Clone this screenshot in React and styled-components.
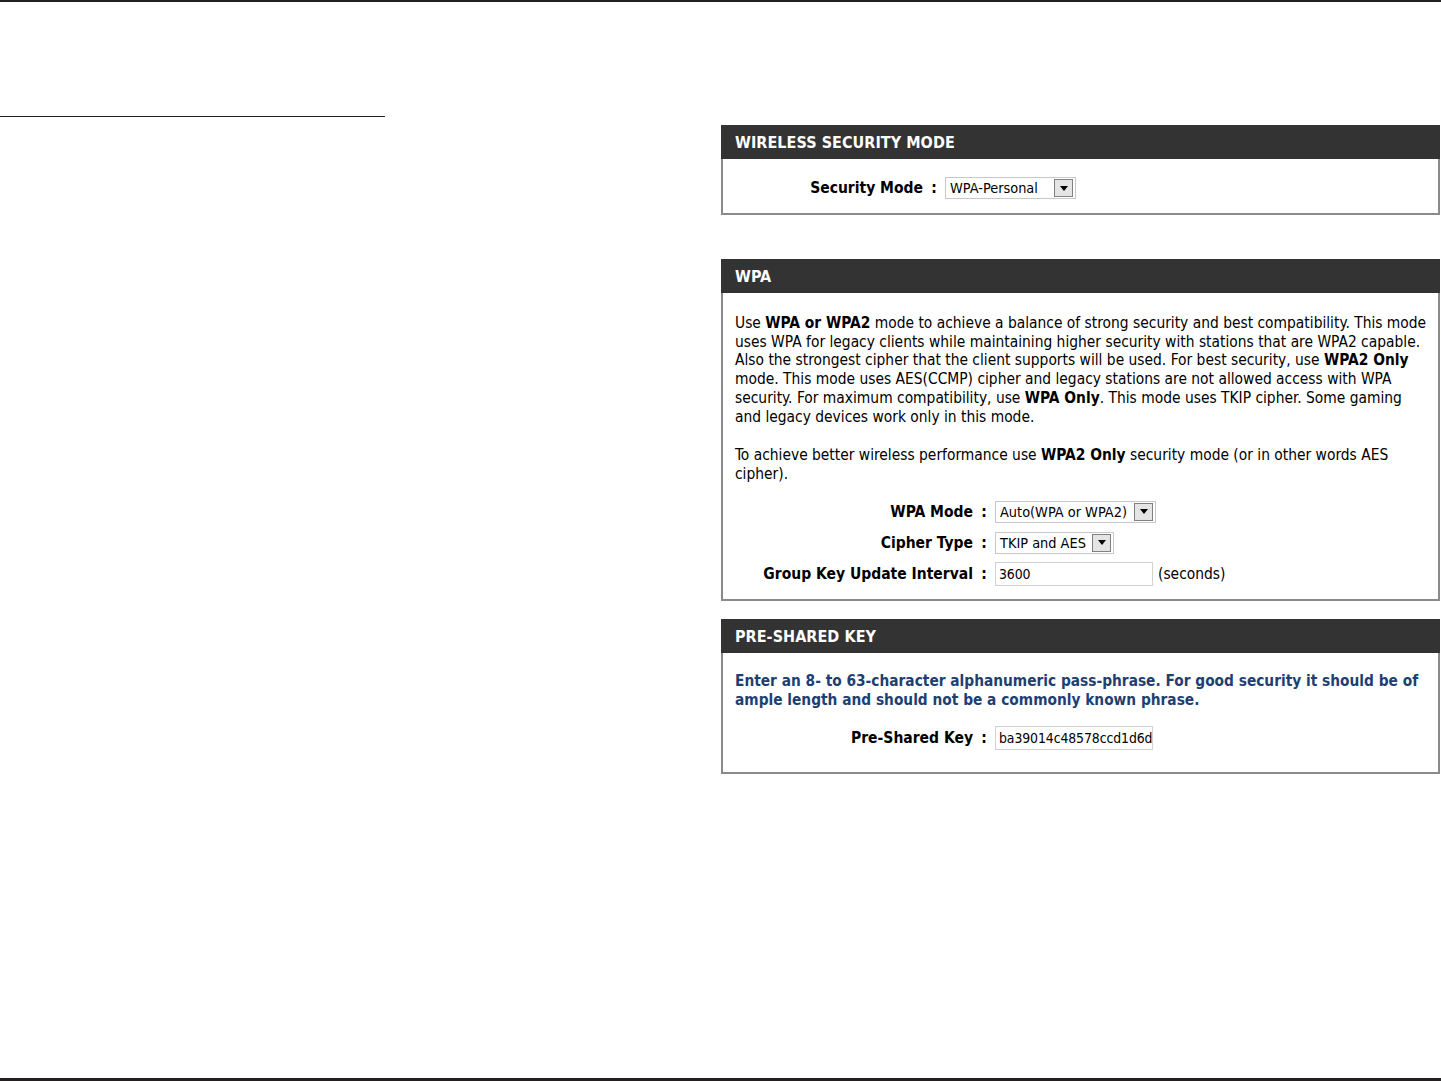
import React from 'react';
import styled, { createGlobalStyle } from 'styled-components';

const GlobalStyle = createGlobalStyle`
  html, body {
    margin: 0;
    padding: 0;
    background: #ffffff;
  }
  body {
    font-family: "DejaVu Sans Condensed", "DejaVu Sans", sans-serif;
    color: #000;
  }
`;

const Page = styled.div`
  box-sizing: border-box;
  height: 1081px;
  border-top: 2px solid #231f20;
  border-bottom: 3px solid #231f20;
  display: grid;
  grid-template-columns: 721px 719px;
  align-items: start;
`;

const LeftColumn = styled.div`
  padding-top: 114px;
`;

const ShortRule = styled.div`
  width: 385px;
  border-top: 1.5px solid #231f20;
`;

const RightColumn = styled.div`
  padding-top: 123px;
  display: flex;
  flex-direction: column;
`;

const Panel = styled.section`
  border: 2px solid #8a8a8a;
  border-top: none;
  background: #fff;
  margin-bottom: ${(p) => p.$gap || 0}px;
`;

const PanelHeader = styled.h2`
  margin: 0 -2px;
  height: 34px;
  background: #333333;
  color: #fff;
  font-size: 16px;
  font-weight: bold;
  line-height: 35px;
  padding-left: 14px;
  letter-spacing: 0.05px;
`;

const PanelBody = styled.div`
  padding: ${(p) => p.$pad || '18px 4px 12px 12px'};
`;

const Para = styled.p`
  margin: 0 0 ${(p) => p.$mb || 0}px 0;
  font-size: ${(p) => (p.$blue ? 15.3 : 15.4)}px;
  line-height: ${(p) => (p.$blue ? 19 : 18.7)}px;
  white-space: nowrap;
  color: ${(p) => (p.$blue ? '#1d3f72' : '#000')};
  font-weight: ${(p) => (p.$blue ? 'bold' : 'normal')};
`;

const FormRows = styled.div`
  display: flex;
  flex-direction: column;
  gap: ${(p) => p.$gap || 8}px;
`;

const Row = styled.div`
  display: grid;
  grid-template-columns: ${(p) => p.$label}px 22px auto;
  align-items: center;
  height: 24px;
`;

const Label = styled.span`
  text-align: right;
  font-weight: bold;
  font-size: 15.5px;
  white-space: nowrap;
`;

const Colon = styled.span`
  font-weight: bold;
  font-size: 15.5px;
  text-align: center;
`;

const FieldWrap = styled.div`
  display: flex;
  align-items: center;
  gap: 5px;
  font-size: 15.4px;
`;

const SelectBox = styled.div`
  box-sizing: border-box;
  width: ${(p) => p.$w}px;
  height: 22px;
  border: 1px solid #c8c8c8;
  display: flex;
  align-items: center;
  justify-content: space-between;
  padding: 0 2px 0 4px;
  font-size: 14.4px;
  white-space: nowrap;
  background: #fff;
`;

const ArrowButton = styled.span`
  box-sizing: border-box;
  flex: none;
  width: 19px;
  height: 18px;
  background: #e4e4e4;
  border: 1px solid #808080;
  display: flex;
  align-items: center;
  justify-content: center;
  &::after {
    content: '';
    border-left: 4px solid transparent;
    border-right: 4px solid transparent;
    border-top: 5px solid #000;
  }
`;

const TextBox = styled.div`
  box-sizing: border-box;
  width: ${(p) => p.$w}px;
  height: 24px;
  border: 1px solid #d2d2d2;
  padding: 3px 2px 0 3px;
  font-size: 13.9px;
  letter-spacing: -0.1px;
  white-space: nowrap;
  overflow: hidden;
  background: #fff;
`;

const Select = ({ w, value }) => (
  <SelectBox $w={w}>
    <span>{value}</span>
    <ArrowButton />
  </SelectBox>
);

const App = () => {
  return (
    <>
      <GlobalStyle />
      <Page>
        <LeftColumn>
          <ShortRule />
        </LeftColumn>
        <RightColumn>
          <Panel $gap={44}>
            <PanelHeader>WIRELESS SECURITY MODE</PanelHeader>
            <PanelBody $pad="17px 12px 13px 12px">
              <Row $label={188}>
                <Label>Security Mode</Label>
                <Colon>:</Colon>
                <FieldWrap>
                  <Select w={131} value="WPA-Personal" />
                </FieldWrap>
              </Row>
            </PanelBody>
          </Panel>

          <Panel $gap={18}>
            <PanelHeader>WPA</PanelHeader>
            <PanelBody $pad="21px 4px 13px 12px">
              <Para $mb={20}>
                Use <b>WPA or WPA2</b> mode to achieve a balance of strong security and best compatibility. This mode
                <br />
                uses WPA for legacy clients while maintaining higher security with stations that are WPA2 capable.
                <br />
                Also the strongest cipher that the client supports will be used. For best security, use <b>WPA2 Only</b>
                <br />
                mode. This mode uses AES(CCMP) cipher and legacy stations are not allowed access with WPA
                <br />
                security. For maximum compatibility, use <b>WPA Only</b>. This mode uses TKIP cipher. Some gaming
                <br />
                and legacy devices work only in this mode.
              </Para>
              <Para $mb={16}>
                To achieve better wireless performance use <b>WPA2 Only</b> security mode (or in other words AES
                <br />
                cipher).
              </Para>
              <FormRows $gap={7}>
                <Row $label={238}>
                  <Label>WPA Mode</Label>
                  <Colon>:</Colon>
                  <FieldWrap>
                    <Select w={161} value="Auto(WPA or WPA2)" />
                  </FieldWrap>
                </Row>
                <Row $label={238}>
                  <Label>Cipher Type</Label>
                  <Colon>:</Colon>
                  <FieldWrap>
                    <Select w={119} value="TKIP and AES" />
                  </FieldWrap>
                </Row>
                <Row $label={238}>
                  <Label>Group Key Update Interval</Label>
                  <Colon>:</Colon>
                  <FieldWrap>
                    <TextBox $w={158}>3600</TextBox>
                    <span>(seconds)</span>
                  </FieldWrap>
                </Row>
              </FormRows>
            </PanelBody>
          </Panel>

          <Panel>
            <PanelHeader>PRE-SHARED KEY</PanelHeader>
            <PanelBody $pad="19px 4px 22px 12px">
              <Para $blue $mb={16}>
                Enter an 8- to 63-character alphanumeric pass-phrase. For good security it should be of
                <br />
                ample length and should not be a commonly known phrase.
              </Para>
              <Row $label={238}>
                <Label>Pre-Shared Key</Label>
                <Colon>:</Colon>
                <FieldWrap>
                  <TextBox $w={158}>ba39014c48578ccd1d6d</TextBox>
                </FieldWrap>
              </Row>
            </PanelBody>
          </Panel>
        </RightColumn>
      </Page>
    </>
  );
};

export default App;
